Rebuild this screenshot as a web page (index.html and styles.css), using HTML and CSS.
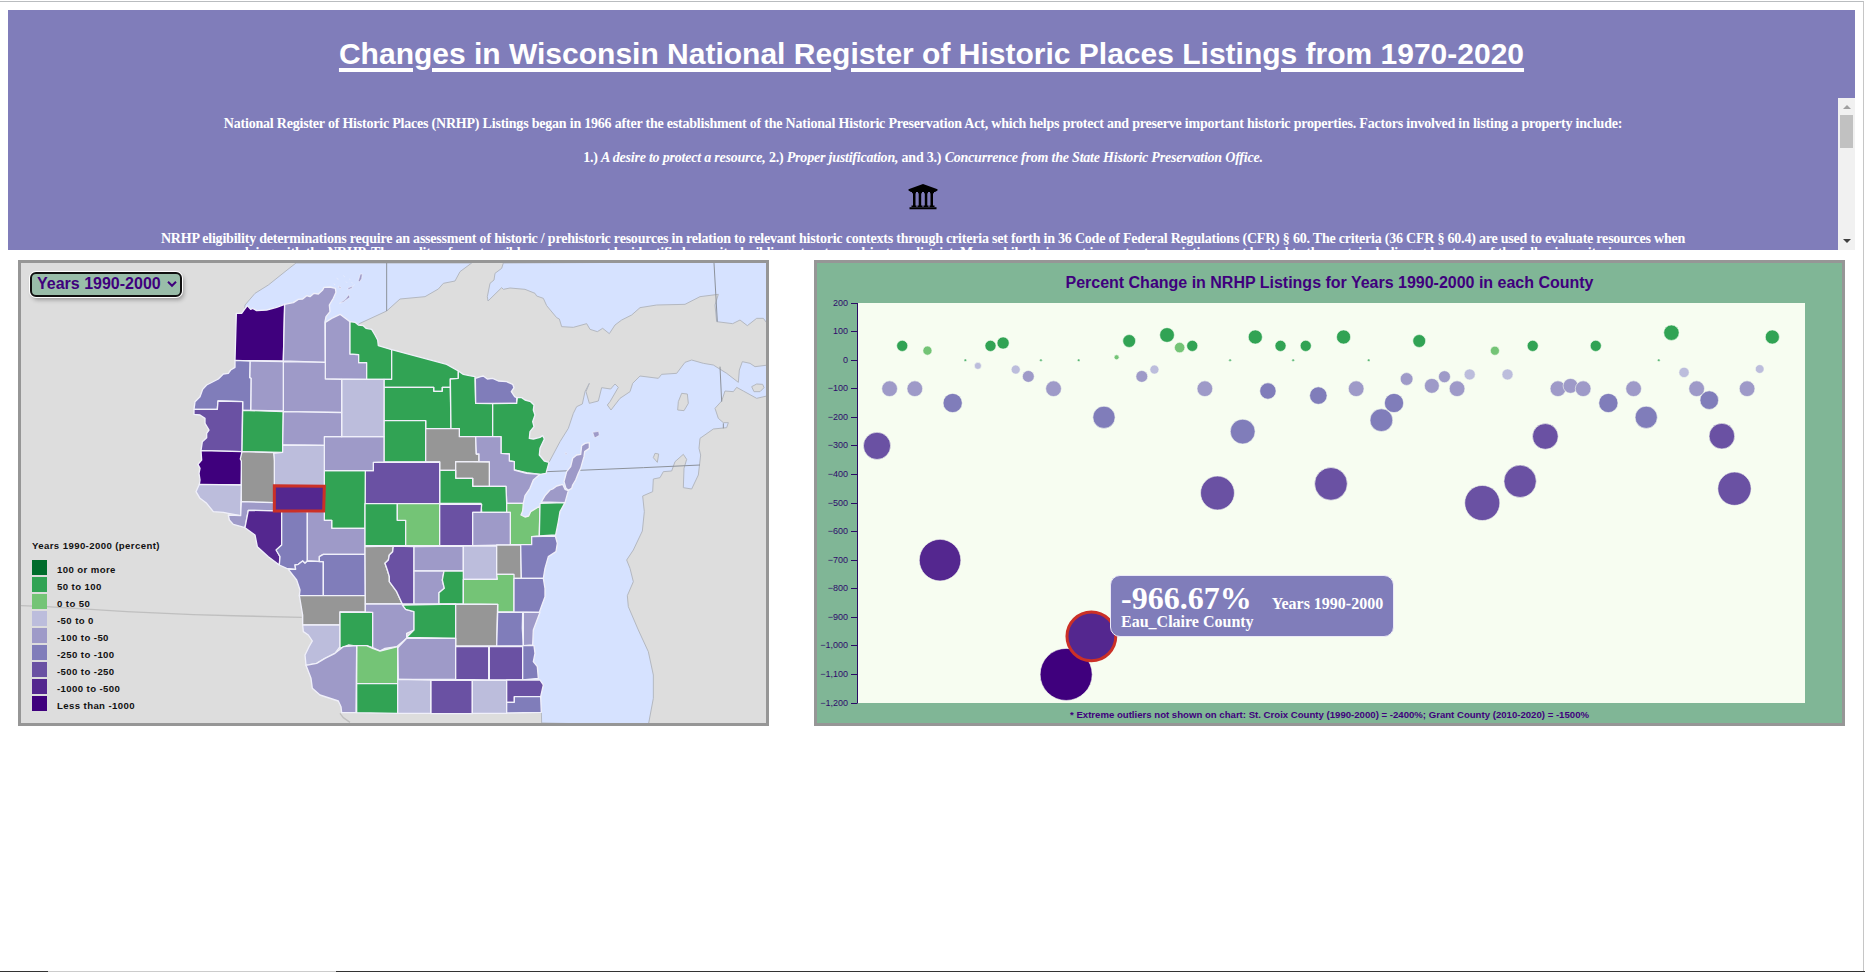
FILE: index.html
```html
<!DOCTYPE html>
<html lang="en">
<head>
<meta charset="utf-8">
<title>Changes in Wisconsin NRHP Listings</title>
<link rel="stylesheet" href="styles.css">
</head>
<body>
<div class="frame">
  <header class="intro">
    <h1>Changes in Wisconsin National Register of Historic Places Listings from 1970-2020</h1>
    <div class="scroller">
      <div class="copy">
        <p class="l1">National Register of Historic Places (NRHP) Listings began in 1966 after the establishment of the National Historic Preservation Act, which helps protect and preserve important historic properties. Factors involved in listing a property include:</p>
        <p class="l2">1.) <i>A desire to protect a resource,</i> 2.) <i>Proper justification,</i> and 3.) <i>Concurrence from the State Historic Preservation Office.</i></p>
        <svg class="museum" width="30" height="26" viewBox="0 0 30 26"><path d="M15 0 29.5 5.2V6.5L27 8H3L.5 6.5V5.2zM4 8h4v1.2H7.500V21.500H8.500V23H3.500V21.500H5V9.200H4zM10 8h4v1.200h-.8V21.500h1.300V23h-5V21.500h1.200V9.200H10zM16 8h4v1.200h-.7V21.500h1.200V23h-5V21.500h1.300V9.200H16zM22 8h4v1.200h-1V21.500h1.500V23h-5V21.500h1V9.200H22zM1.500 23.200h27V25.300h-27z"/></svg>
        <p class="l3">NRHP eligibility determinations require an assessment of historic / prehistoric resources in relation to relevant historic contexts through criteria set forth in 36 Code of Federal Regulations (CFR) § 60. The criteria (36 CFR § 60.4) are used to evaluate resources when</p>
        <p class="l4">applying with the NRHP. The quality of any tangible resource must be identified as a site, building, structure, object, or district. Meanwhile their most important association must be tied to the past, including at least one of the following criteria:</p>
      </div>
      <div class="scrollbar"><span class="up"></span><span class="thumb"></span><span class="down"></span></div>
    </div>
  </header>
  <main class="panels">
    <section class="panel map">
      <svg class="fill" viewBox="33 24 2235 1380" preserveAspectRatio="none">
        <g class="water">
          <path d="M858 24 825 50 775 90 735 115 705 150 700 220H1030L1050 205 1130 168 1170 132 1245 125 1285 102 1300 85 1335 78 1350 50 1385 24Z"/>
          <path d="M1480 24 1475 40 1455 55 1452 75 1440 85 1432 125 1434 138 1475 98 1480 103 1500 99 1545 103 1575 115 1580 123 1600 130 1610 152 1640 188 1648 192 1655 215 1690 217 1730 206 1740 223 1762 230 1778 220 1798 236 1815 210 1835 195 1865 180 1890 158 1940 150 2025 148 2070 125 2125 118 2115 150 2120 200 2168 206 2190 195 2212 212 2240 190 2260 190 2275 210V20Z"/>
          <path d="M1590 658 1617 622 1650 560 1675 520 1690 475 1700 455 1717 447 1725 410 1738 385 1728 410 1738 445 1765 438 1775 398 1802 402 1815 387 1825 397 1800 440 1792 450 1803 465 1830 430 1860 410 1868 385 1890 363 1945 370 1955 358 2000 355 2025 322 2045 315 2080 325 2110 330 2150 355 2185 382 2188 345 2197 320 2220 325 2235 335 2275 330V422L2240 430 2200 408 2180 397 2170 410 2145 408 2135 438 2115 460 2125 490 2140 503 2155 503 2150 518 2110 522 2070 550 2067 580 2072 600 2065 660 2045 702 2020 698 2022 640 2030 613 2020 598 1995 620 1985 648 1960 650 1950 668 1930 672 1928 710 1898 723 1903 770 1897 828 1870 885 1850 915 1860 940 1870 980 1852 1022 1855 1055 1885 1125 1915 1190 1930 1260 1930 1330 1915 1410 1595 1404 1594 1370 1540 1300V1000L1550 800 1500 740V690Z"/>
        </g>
        <g class="isle"><path d="M2015 415 2032 417 2035 445 2022 467 2003 465 2005 440ZM1935 595 1946 597 1942 622 1930 608ZM2225 395 2240 387 2258 388 2262 398 2250 410 2232 410Z"/></g>
        <path class="bound" d="M1130 24V168M2112 24 2122 200M2130 335 2135 440M2140 505V520M1610 650 1900 638 2070 630"/>
        <path class="bound soft" d="M33 1052 110 1055 350 1070 550 1079 700 1083 875 1087M990 1375 1000 1388 1020 1402"/>
        <g id="counties"></g>
        <g class="islets c4"><path d="M985 94l8 3-2 5zM1015 98l13-4-3 6-12 4zM988 145l18-12 10-14 4 8-20 14zM1045 77l6-20h6l-2 14-6 10zM980 70l5 3M1000 62l4 3M1025 82l3 3M1008 80l3 3M972 86l3 4M1030 92l4 -3M1018 72l3 2M1748 532l18-3 2 12-14 8zM1665 593l6 2-3 5z"/></g>
      </svg>
      <div class="overlay">
        <div class="picker">Years 1990-2000<svg width="10" height="8" viewBox="0 0 10 8"><path d="M1 1.800 5 5.800 9 1.800"/></svg></div>
        <div class="legend">
          <div class="caption">Years 1990-2000 (percent)</div>
          <div class="row"><b class="k1"></b>100 or more</div>
          <div class="row"><b class="k2"></b>50 to 100</div>
          <div class="row"><b class="k3"></b>0 to 50</div>
          <div class="row"><b class="k4"></b>-50 to 0</div>
          <div class="row"><b class="k5"></b>-100 to -50</div>
          <div class="row"><b class="k6"></b>-250 to -100</div>
          <div class="row"><b class="k7"></b>-500 to -250</div>
          <div class="row"><b class="k8"></b>-1000 to -500</div>
          <div class="row"><b class="k9"></b>Less than -1000</div>
        </div>
      </div>
    </section>
    <section class="panel chart">
      <svg class="fill" viewBox="817 263 1025 460">
        <rect class="plot" x="858" y="303" width="947" height="400"/>
        <text class="title" x="1065.500" y="288" textLength="528">Percent Change in NRHP Listings for Years 1990-2000 in each County</text>
        <g id="axis"></g>
        <g id="dots"></g>
        <text class="note" x="1070" y="718" textLength="519">* Extreme outliers not shown on chart: St. Croix County (1990-2000) = -2400%; Grant County (2010-2020) = -1500%</text>
      </svg>
      <div class="tip"><div class="figure"><strong>-966.67%</strong><span>Years 1990-2000</span></div><div class="place">Eau_Claire County</div></div>
    </section>
  </main>
</div>
<div class="edge"></div>
<script src="charts.js"></script>
</body>
</html>
```
FILE: styles.css
```css
body { margin: 0; height: 972px; background: #fff; overflow: hidden; display: flex; flex-direction: column; padding-top: 1px; box-sizing: border-box; }
.frame { flex: 1; border-top: 1px solid #b9bcbf; border-right: 1px solid #c6c6c6; margin-right: 1px; padding: 8px 0 0 8px; }
.edge { height: 1px; background: linear-gradient(90deg, #333 48px, #ccc 48px 336px, #333 336px); }
.intro { width: 1847px; height: 240px; background: #807dba; color: #fff; }
h1 { margin: 0; height: 88px; box-sizing: border-box; padding: 25px 0 0; font: bold 30px/37px "Liberation Sans", Arial, sans-serif; text-align: center; text-decoration: underline; text-decoration-thickness: 4px; text-underline-offset: 4px; white-space: nowrap; }
.scroller { height: 152px; display: flex; overflow: hidden; }
.copy { flex: 1; display: flex; flex-direction: column; align-items: center; font: bold 14px/17px "Liberation Serif", "Times New Roman", serif; letter-spacing: -.21px; padding-top: 17px; }
.copy p { margin: 0; white-space: nowrap; }
.l2 { padding-top: 17px; }
.l3 { height: 14px; }
.museum { margin: 18px 0 20px; flex: none; }
.scrollbar { width: 17px; background: #f1f1f1; display: flex; flex-direction: column; align-items: center; }
.up, .down { border: 4px solid transparent; }
.up { border-bottom-color: #a0a0a0; margin: 5px 0 6px; border-top-width: 2px; }
.thumb { width: 13px; height: 33px; background: #c1c1c1; }
.down { border-top-color: #404040; margin-top: 91px; border-bottom-width: 0; }
.panels { display: flex; gap: 45px; padding: 10px 0 0 10px; }
.panel { border: 3px solid #969696; height: 460px; position: relative; flex: none; }
.map { width: 745px; background: #ddd; }
.chart { width: 1025px; background: #80b696; }
.fill { display: block; width: 100%; height: 100%; }
.water path { fill: #d6e2ff; stroke: #b4b8c0; stroke-width: 3; }
.isle path { fill: #ddd; stroke: #b4b8c0; stroke-width: 3; }
.bound { fill: none; stroke: #8d929b; stroke-width: 3; }
.soft { stroke: #bfbfbf; stroke-width: 4; }
.county { stroke: #f0f0fa; stroke-width: 4; stroke-linejoin: round; }
.islets { stroke: #f0f0fa; stroke-width: 2; }
.c0 { fill: #969696; }
.c1, .k1 { fill: #006d2c; background: #006d2c; }
.c2, .k2 { fill: #31a354; background: #31a354; }
.c3, .k3 { fill: #74c476; background: #74c476; }
.c5, .k4 { fill: #bcbddc; background: #bcbddc; }
.c4, .k5 { fill: #9e9ac8; background: #9e9ac8; }
.c6, .k6 { fill: #807dba; background: #807dba; }
.c7, .k7 { fill: #6a51a3; background: #6a51a3; }
.c8, .k8 { fill: #54278f; background: #54278f; }
.c9, .k9 { fill: #3f007d; background: #3f007d; }
.county.picked { stroke: #cb3027; stroke-width: 9; stroke-linejoin: miter; }
.overlay { position: absolute; left: 9px; top: 9px; font-family: "Liberation Sans", Arial, sans-serif; font-weight: bold; }
.picker { width: 152px; height: 25px; box-sizing: border-box; border: 2px solid #101010; border-radius: 6px; background: #99bda9; color: #3f007d; font-size: 16px; display: flex; align-items: center; gap: 6px; padding: 0 4px 1px 5px; box-shadow: 0 0 0 1px #fff, 2px 3px 4px rgba(0,0,0,.3); white-space: nowrap; }
.picker svg { fill: none; stroke: #3f007d; stroke-width: 2; flex: none; }
.legend { padding: 241px 0 0 2px; font-size: 9.600px; color: #111; letter-spacing: .4px; }
.caption { height: 22px; line-height: 16px; }
.row { display: flex; height: 17px; line-height: 20px; gap: 10px; white-space: nowrap; }
.row b { width: 15px; height: 15px; }
.plot { fill: #f7fdf1; }
.title { font: bold 16px "Liberation Sans", Arial, sans-serif; fill: #3f007d; }
.note { font: bold 9.600px "Liberation Sans", Arial, sans-serif; fill: #3f007d; }
#axis text { font: 9px "Liberation Sans", Arial, sans-serif; fill: #2f0a6b; text-anchor: end; }
#axis path { fill: none; stroke: #2b0a66; stroke-width: 1; }
#dots circle { stroke: #f7fdf1; stroke-width: .6; }
#dots .picked { stroke: #cb3027; stroke-width: 3; }
.tip { position: absolute; left: 293px; top: 312px; width: 284px; height: 62px; box-sizing: border-box; background: #807dba; border: 1px solid #eceaf7; border-radius: 10px; color: #fff; padding: 4px 0 0 10px; font: bold 16px/18px "Liberation Serif", "Times New Roman", serif; }
.figure { display: flex; align-items: baseline; gap: 20px; height: 33px; white-space: nowrap; }
.figure strong { font-size: 32px; line-height: 36px; }
```
FILE: charts.js
```js
const NS = "http://www.w3.org/2000/svg";
function add(parent, tag, attrs, text) {
  const el = document.createElementNS(NS, tag);
  for (const k in attrs) el.setAttribute(k, attrs[k]);
  if (text) el.textContent = text;
  parent.appendChild(el);
}

// [colour class, outline]
const counties = [
[9,"679,175 695,175 702,165 712,152 722,163 728,160 740,167 770,165 800,157 824,148 820,318 675,316"],
[4,"824,148 850,143 865,133 878,132 890,122 900,125 912,115 925,117 938,105 942,97 960,96 976,100 978,112 970,130 958,150 960,170 948,185 945,200 946,322 820,318"],
[4,"946,202 965,190 990,178 1020,200 1020,297 1046,299 1046,323 1070,323 1070,373 946,372"],
[2,"1020,200 1035,202 1045,210 1060,212 1068,220 1085,223 1095,240 1103,255 1105,272 1145,284 1145,373 1070,373 1070,323 1046,323 1046,299 1020,297"],
[2,"1145,284 1310,328 1345,348 1345,370 1321,372 1321,397 1297,397 1297,409 1271,409 1271,397 1122,397 1122,373 1145,373"],
[2,"1122,397 1271,397 1271,409 1297,409 1297,397 1321,397 1323,521 1247,521 1247,497 1122,497"],
[2,"1122,497 1247,497 1247,621 1122,621"],
[2,"1321,372 1345,370 1345,348 1360,358 1378,362 1395,365 1397,445 1448,446 1448,545 1348,545 1348,521 1323,521"],
[6,"1396,370 1412,365 1420,363 1432,372 1448,370 1465,378 1490,380 1508,388 1512,398 1504,410 1514,425 1520,428 1520,445 1397,445"],
[2,"1448,446 1520,445 1522,428 1535,428 1545,435 1562,440 1572,450 1570,465 1575,480 1568,500 1572,515 1560,530 1558,550 1570,552 1590,547 1598,542 1603,552 1590,580 1588,600 1603,618 1617,622 1608,655 1590,658 1550,653 1513,645 1513,620 1498,618 1498,597 1473,595 1473,545 1448,545"],
[0,"1247,521 1348,521 1348,545 1397,545 1399,597 1407,597 1407,620 1337,620 1337,646 1289,646 1289,621 1247,621"],
[4,"1397,545 1473,545 1473,595 1498,597 1498,618 1513,620 1513,645 1550,655 1590,658 1570,675 1560,700 1545,722 1540,745 1490,745 1488,694 1438,694 1438,621 1407,620 1407,597 1399,597"],
[0,"1337,620 1438,621 1438,694 1388,694 1388,670 1337,670"],
[2,"1289,646 1337,646 1337,670 1388,670 1388,694 1488,694 1490,745 1490,772 1415,772 1413,745 1289,745"],
[3,"1490,745 1540,745 1538,768 1533,780 1545,786 1556,783 1562,770 1590,753 1588,843 1565,845 1565,869 1501,869 1501,772 1490,772"],
[4,"1594,741 1605,722 1620,705 1628,702 1640,693 1658,688 1665,703 1675,707 1670,725 1665,743"],
[4,"1662,680 1670,650 1682,635 1688,610 1700,600 1712,598 1715,572 1725,565 1738,563 1738,580 1724,590 1722,605 1717,622 1712,640 1705,655 1697,675 1688,690 1685,700 1675,706 1668,700"],
[2,"1590,745 1665,743 1650,770 1645,800 1637,840 1588,843"],
[7,"1066,647 1090,647 1090,622 1289,621 1289,745 1065,746"],
[2,"943,647 1066,647 1065,820 965,820 965,796 943,796"],
[4,"943,545 1122,545 1122,621 1090,622 1090,647 943,647"],
[5,"995,373 1122,373 1122,545 995,545"],
[4,"820,320 946,322 946,372 995,373 995,472 820,470"],
[4,"720,318 820,320 820,468 722,466 723,370 719,368"],
[6,"675,316 720,318 719,368 723,370 722,466 698,466 698,440 624,438 622,463 552,463 555,440 570,425 578,403 590,390 625,372 640,357 655,355 662,345 675,337"],
[7,"552,463 622,463 624,438 698,440 696,590 573,587 577,560 590,548 590,535 597,525 585,505 585,490 570,480 552,478"],
[2,"698,466 820,470 818,592 696,590"],
[4,"820,470 995,473 995,545 943,545 943,571 818,570"],
[5,"818,570 943,571 943,692 793,692 793,617 790,595 818,592"],
[9,"573,587 696,590 694,690 568,688 570,675 567,655 570,640 564,628 575,615"],
[0,"696,590 791,593 793,617 793,743 694,740 694,618 691,612"],
[5,"568,688 694,690 692,782 655,775 640,772 610,770 590,745 570,730 558,710"],
[4,"694,740 793,743 793,768 715,766 705,818 670,808 658,795 655,780 692,782"],
[8,"715,766 815,768 815,870 800,885 810,905 808,930 775,905 742,875 735,840 705,818"],
[6,"815,768 892,770 892,918 885,925 878,918 865,928 855,930 857,943 830,940 808,930 810,905 798,885 815,870"],
[4,"892,770 943,768 943,796 965,796 965,820 1065,820 1065,898 940,898 928,905 928,920 892,918"],
[6,"835,943 857,943 855,930 865,928 878,918 885,925 892,918 940,920 940,1022 868,1022 870,1005 860,975"],
[6,"928,920 928,905 940,898 1065,898 1066,1022 940,1022 940,920"],
[0,"868,1022 1066,1022 1066,1071 990,1071 990,1110 878,1110 878,1080"],
[5,"878,1110 990,1110 990,1175 975,1195 945,1210 920,1225 888,1231 885,1200 897,1175 907,1158 895,1140 880,1130"],
[2,"990,1071 1088,1072 1088,1178 1070,1172 1050,1175 1015,1170 990,1180"],
[0,"1065,875 1150,873 1148,890 1138,900 1135,915 1125,925 1132,945 1138,965 1138,980 1160,1010 1177,1047 1066,1047"],
[7,"1150,873 1212,875 1212,1047 1177,1047 1160,1010 1138,980 1138,965 1132,945 1125,925 1135,915 1138,900 1148,890"],
[2,"1065,746 1162,746 1162,796 1187,796 1187,872 1065,872"],
[3,"1162,746 1289,746 1289,872 1187,872 1187,796 1162,796"],
[7,"1289,747 1415,748 1413,772 1388,772 1388,872 1289,872"],
[4,"1388,772 1501,772 1501,870 1388,872"],
[4,"1212,875 1360,873 1360,948 1212,948"],
[5,"1360,873 1460,873 1462,973 1360,973"],
[0,"1460,870 1532,870 1534,970 1510,970 1510,958 1460,958"],
[6,"1565,845 1636,843 1642,865 1638,890 1615,905 1605,940 1600,970 1534,970 1532,869 1565,869"],
[4,"1212,948 1302,948 1297,975 1303,1000 1287,1013 1287,1047 1212,1047"],
[2,"1302,948 1360,948 1360,1047 1287,1047 1287,1013 1303,1000 1297,975"],
[3,"1360,973 1462,973 1460,958 1512,958 1512,1071 1463,1071 1463,1048 1360,1047"],
[6,"1512,970 1600,970 1605,1000 1605,1025 1588,1072 1512,1071"],
[4,"1066,1047 1177,1047 1187,1063 1212,1070 1212,1125 1190,1135 1190,1150 1160,1175 1125,1180 1110,1188 1088,1178 1088,1072 1066,1071"],
[2,"1177,1050 1337,1047 1337,1150 1190,1147 1212,1125 1212,1070 1187,1063"],
[0,"1337,1048 1463,1048 1460,1172 1337,1173"],
[6,"1463,1072 1538,1072 1537,1120 1540,1172 1460,1173"],
[4,"1540,1072 1590,1072 1570,1125 1568,1170 1540,1172"],
[4,"1190,1150 1337,1150 1337,1273 1165,1273 1163,1178"],
[7,"1337,1175 1436,1175 1436,1275 1337,1273"],
[7,"1438,1175 1538,1175 1538,1275 1438,1275"],
[6,"1538,1172 1572,1172 1575,1195 1570,1220 1582,1235 1585,1270 1538,1275"],
[3,"1040,1172 1070,1172 1088,1180 1110,1188 1163,1175 1163,1286 1040,1286"],
[2,"1040,1286 1163,1286 1163,1375 1040,1373"],
[4,"888,1231 920,1225 945,1210 975,1195 1000,1175 1040,1172 1038,1373 995,1373 993,1355 985,1338 930,1320 907,1300 903,1270"],
[5,"1163,1273 1262,1275 1262,1375 1163,1375"],
[7,"1263,1276 1387,1276 1387,1376 1263,1376"],
[5,"1387,1276 1490,1276 1490,1375 1387,1375"],
[7,"1490,1275 1590,1275 1600,1290 1592,1325 1513,1325 1513,1342 1490,1342"],
[6,"1513,1325 1592,1325 1594,1372 1490,1374 1490,1342 1513,1342"],
["8 picked","793,692 943,694 941,768 793,768"]
];
const map = document.getElementById("counties");
for (const [c, pts] of counties) add(map, "polygon", { class: "county c" + c, points: pts });

// Percent change by county, in alphabetical order; null is off the chart
const change = [-300,-100,50,-100,33.3,-700,-150,0,-20,50,60,-33,-57,0,-100,-1100,0,-966.67,-200,10,67,-57,-33,88,44,50,-100,-465,0,-250,81,-108,50,0,50,-124,-433,81,-100,0,-210,-150,-66,67,-90,-58,-100,-50,-500,33,-50,-424,50,-267,-100,-90,-100,50,-150,null,-100,-200,0,96,-43,-100,-140,-266,-450,-100,-31,81];
function shade(v) {
  if (v >= 100) return 1;
  if (v >= 50) return 2;
  if (v >= 0) return 3;
  if (v >= -50) return 5;
  if (v >= -100) return 4;
  if (v >= -250) return 6;
  if (v >= -500) return 7;
  return v >= -1000 ? 8 : 9;
}
const yOf = v => 303 + (200 - v) * 400 / 1400;
const dots = document.getElementById("dots");
change.forEach((v, i) => {
  if (v === null) return;
  add(dots, "circle", {
    class: "c" + (v === 0 ? 2 : shade(v)) + (v === -966.67 ? " picked" : ""),
    cx: 877 + 12.61 * i, cy: yOf(v), r: Math.max(1.2, Math.sqrt(Math.abs(v)) * 0.785)
  });
});
const axis = document.getElementById("axis");
let d = "M857.5 303V703";
for (let v = 200; v >= -1200; v -= 100) {
  const y = Math.floor(yOf(v)) + .5;
  d += "M851 " + y + "H857.5";
  add(axis, "text", { x: 848, y: y + 2.5 }, v.toLocaleString("en-US").replace("-", "−"));
}
add(axis, "path", { d });
```
